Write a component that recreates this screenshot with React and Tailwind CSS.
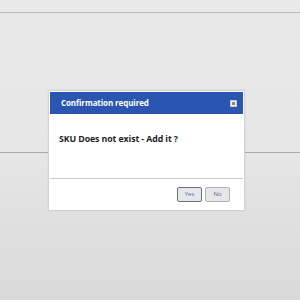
export default function App() {
  return (
    <div className="relative w-[300px] h-[300px] overflow-hidden bg-gradient-to-b from-[#e8e8e8] via-[#e6e6e6] to-[#d9d9d9] font-['Open_Sans',sans-serif]">
      {/* top strip */}
      <div className="h-[12px] bg-[#e9e9e9]" />
      <div className="h-px bg-[#b9bdc2]" />
      {/* background rule behind the dialog */}
      <div className="mt-[139px] h-px bg-[#a9adb2]" />

      {/* Modal */}
      <div className="absolute left-[48px] top-[90px] w-[197px] bg-white border border-[#d2d2d2] p-px shadow-[0_0_2px_rgba(0,0,0,0.08)]">
        <div className="h-[22px] bg-[#2a55b0] flex items-center justify-between pl-[11px] pr-[6px]">
          <span className="text-white text-[8px] font-bold tracking-[-0.1px]">Confirmation required</span>
          <span className="w-[7px] h-[7px] bg-[#f2f2f2] border border-[#c8c8c8] flex items-center justify-center">
            <span className="w-[3px] h-[3px] bg-[#8a8a8a]" />
          </span>
        </div>
        <div className="h-[64px] pl-[9px] pt-[20px]">
          <p className="text-[8.8px] leading-[11px] font-bold text-[#1e1e1e] tracking-[-0.1px]">SKU Does not exist - Add it ?</p>
        </div>
        <div className="h-[31px] border-t border-[#c9c9c9] flex items-center justify-end gap-[3px] pr-[13px]">
          <button className="w-[25px] h-[15px] rounded-[2px] border border-[#6e6e70] bg-[#e6e6ee] text-[6px] text-[#5a6a8a] leading-none">Yes</button>
          <button className="w-[25px] h-[15px] rounded-[2px] border border-[#b3b3b3] bg-[#e6e6ea] text-[6px] text-[#5a6a8a] leading-none">No</button>
        </div>
      </div>
    </div>
  );
}
